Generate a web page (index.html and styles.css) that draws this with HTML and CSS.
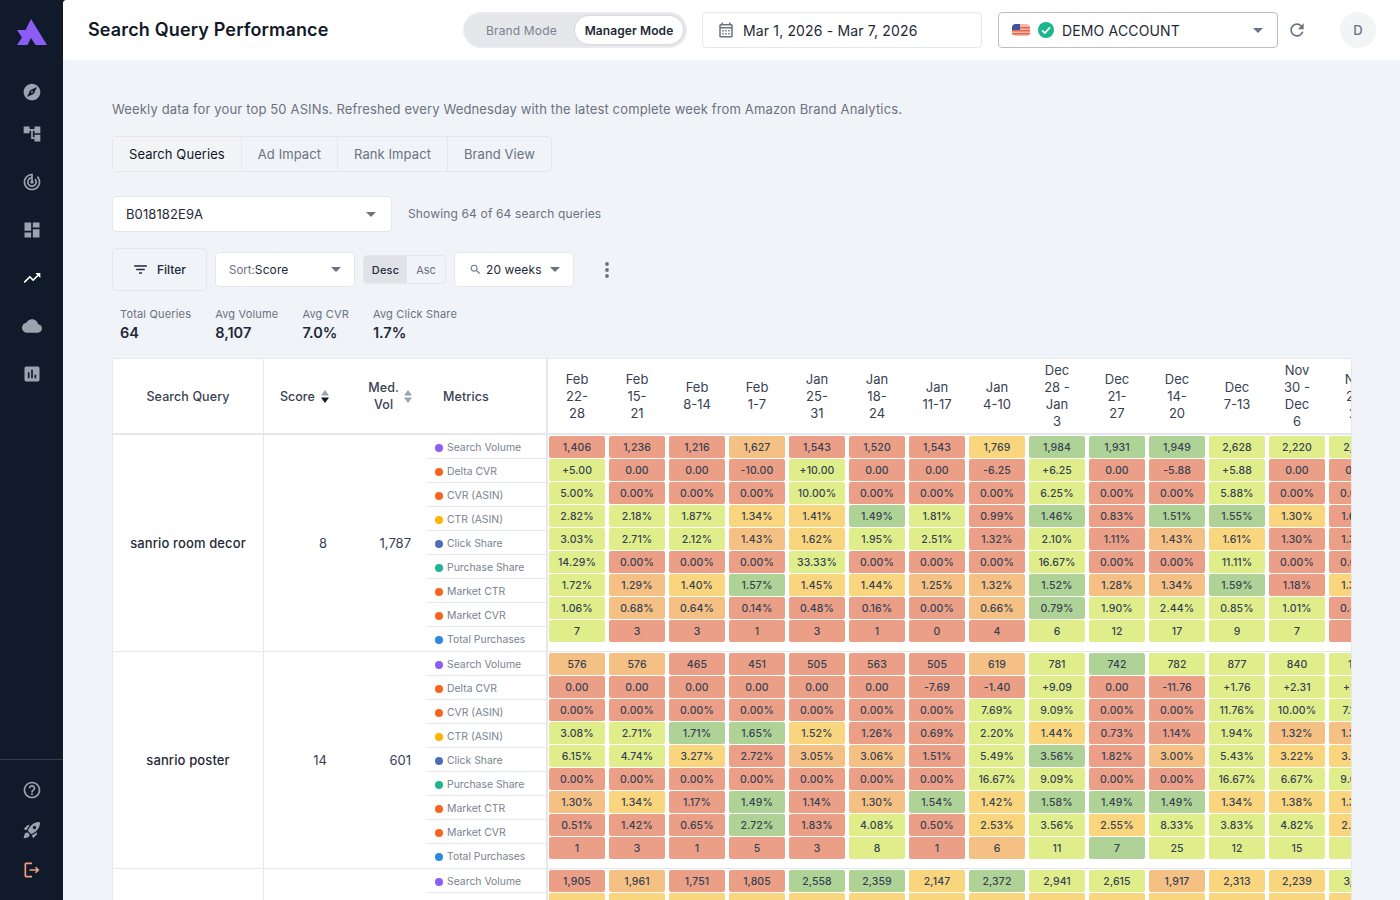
FILE: index.html
```html
<!DOCTYPE html>
<html lang="en">
<head>
<meta charset="utf-8">
<title>Search Query Performance</title>
<link rel="stylesheet" href="styles.css">
</head>
<body>
<div class="app">
  <aside class="sidebar">
    <svg class="logo" viewBox="0 0 30 26"><path d="M14 0 30 26H18.500L14 19 10.500 26H0L5 18.500 0 11H8.500Z"/></svg>
    <nav class="nav">
      <svg class="ico ico-first" viewBox="0 0 24 24"><path d="M12 10.900c-.61 0-1.100.49-1.100 1.100s.49 1.100 1.100 1.100c.61 0 1.100-.49 1.100-1.100s-.49-1.100-1.100-1.100zM12 2C6.480 2 2 6.480 2 12s4.480 10 10 10 10-4.480 10-10S17.520 2 12 2zm2.190 12.190L6 18l3.810-8.190L18 6l-3.810 8.190z"/></svg>
      <svg class="ico" viewBox="0 0 24 24"><path d="M22 11V3h-7v3H9V3H2v8h7V8h2v10h4v3h7v-8h-7v3h-2V8h2v3z"/></svg>
      <svg class="ico" viewBox="0 0 24 24"><path d="M19.070 4.930l-1.410 1.410C19.100 7.790 20 9.790 20 12c0 4.420-3.580 8-8 8s-8-3.580-8-8c0-4.080 3.050-7.440 7-7.930v2.020C8.160 6.570 6 9.030 6 12c0 3.310 2.690 6 6 6s6-2.690 6-6c0-1.660-.67-3.160-1.760-4.240l-1.410 1.410C15.550 9.900 16 10.900 16 12c0 2.210-1.790 4-4 4s-4-1.790-4-4c0-1.860 1.280-3.410 3-3.860v2.140c-.6.35-1 .98-1 1.720 0 1.100.9 2 2 2s2-.9 2-2c0-.74-.4-1.380-1-1.720V2h-1C6.480 2 2 6.480 2 12s4.480 10 10 10 10-4.480 10-10c0-2.760-1.120-5.260-2.930-7.070z"/></svg>
      <svg class="ico" viewBox="0 0 24 24"><path d="M3 13h8V3H3v10zm0 8h8v-6H3v6zm10 0h8V11h-8v10zm0-18v6h8V3h-8z"/></svg>
      <svg class="ico ico-on" viewBox="0 0 24 24"><path d="M16 6l2.290 2.290-4.880 4.880-4-4L2 16.590 3.410 18l6-6 4 4 6.300-6.290L22 12V6z"/></svg>
      <svg class="ico" viewBox="0 0 24 24"><path d="M19.350 10.040C18.670 6.590 15.640 4 12 4 9.110 4 6.600 5.640 5.350 8.040 2.340 8.360 0 10.910 0 14c0 3.310 2.690 6 6 6h13c2.760 0 5-2.240 5-5 0-2.640-2.050-4.780-4.650-4.960z"/></svg>
      <svg class="ico" viewBox="0 0 24 24"><path d="M19 3H5c-1.100 0-2 .9-2 2v14c0 1.100.9 2 2 2h14c1.100 0 2-.9 2-2V5c0-1.100-.9-2-2-2zM9 17H7v-7h2v7zm4 0h-2V7h2v10zm4 0h-2v-4h2v4z"/></svg>
    </nav>
    <div class="nav-bottom">
      <svg class="ico" viewBox="0 0 24 24"><path d="M11 18h2v-2h-2v2zm1-16C6.480 2 2 6.480 2 12s4.480 10 10 10 10-4.480 10-10S17.520 2 12 2zm0 18c-4.410 0-8-3.590-8-8s3.590-8 8-8 8 3.590 8 8-3.590 8-8 8zm0-14c-2.210 0-4 1.790-4 4h2c0-1.100.9-2 2-2s2 .9 2 2c0 2-3 1.750-3 5h2c0-2.250 3-2.500 3-5 0-2.210-1.790-4-4-4z"/></svg>
      <svg class="ico" viewBox="0 0 24 24"><path d="M9.190 6.350c-2.040 2.290-3.440 5.580-3.570 5.890L2 10.690l4.050-4.050c.47-.47 1.150-.68 1.810-.55l1.330.26zM11.170 17s3.740-1.550 5.890-3.700c5.400-5.400 4.500-9.620 4.210-10.570-.95-.3-5.170-1.190-10.570 4.210C8.550 9.050 7 12.830 7 12.830L11.170 17zm6.480-2.190c-2.290 2.040-5.580 3.440-5.890 3.570L13.310 22l4.050-4.050c.47-.47.68-1.150.55-1.810l-.26-1.330zM9 18c0 .83-.34 1.580-.88 2.120C6.940 21.300 2 22 2 22s.7-4.940 1.880-6.120C4.420 15.340 5.170 15 6 15c1.660 0 3 1.340 3 3zm4-9c0-1.100.9-2 2-2s2 .9 2 2-.9 2-2 2-2-.9-2-2z"/></svg>
      <svg class="ico ico-exit" viewBox="0 0 24 24"><path d="M17 8l-1.410 1.410L17.170 11H9v2h8.170l-1.580 1.580L17 16l4-4-4-4zM5 5h7V3H5c-1.100 0-2 .9-2 2v14c0 1.100.9 2 2 2h7v-2H5V5z"/></svg>
    </div>
  </aside>

  <div class="main">
    <header class="topbar">
      <h1 class="title">Search Query Performance</h1>
      <div class="mode">
        <span class="mode-off">Brand Mode</span>
        <span class="mode-on">Manager Mode</span>
      </div>
      <div class="date">
        <svg class="date-ico" viewBox="0 0 24 24"><path d="M19 4h-1V2h-2v2H8V2H6v2H5c-1.110 0-1.990.9-1.990 2L3 20c0 1.100.89 2 2 2h14c1.100 0 2-.9 2-2V6c0-1.100-.9-2-2-2zm0 16H5V10h14v10zm0-12H5V6h14v2zM9 14H7v-2h2v2zm4 0h-2v-2h2v2zm4 0h-2v-2h2v2zm-8 4H7v-2h2v2zm4 0h-2v-2h2v2zm4 0h-2v-2h2v2z"/></svg>
        <span>Mar 1, 2026 - Mar 7, 2026</span>
      </div>
      <div class="account">
        <svg class="flag" viewBox="0 0 18 12">
          <rect width="18" height="12" rx="4" fill="#f6b8a4"/>
          <path d="M0 3H18V4.500H0ZM0 6H18V7.500H0ZM0 9H18V10.500H0Z" fill="#e4674e"/>
          <path d="M4 0H8V6H0V4A4 4 0 0 1 4 0Z" fill="#3f51a3"/>
        </svg>
        <svg class="check" viewBox="0 0 16 16"><circle cx="8" cy="8" r="8" fill="#1db58d"/><path d="M4 8.300 6.900 11 12 5.400" fill="none" stroke="#fff" stroke-width="1.800"/></svg>
        <span class="account-name">DEMO ACCOUNT</span>
        <span class="caret"></span>
      </div>
      <svg class="refresh" viewBox="0 0 24 24"><path d="M17.650 6.350C16.200 4.900 14.210 4 12 4c-4.420 0-7.990 3.580-7.990 8s3.570 8 7.990 8c3.730 0 6.840-2.550 7.730-6h-2.080c-.82 2.330-3.040 4-5.650 4-3.310 0-6-2.690-6-6s2.690-6 6-6c1.660 0 3.140.69 4.220 1.780L13 11h7V4l-2.350 2.350z"/></svg>
      <div class="avatar">D</div>
    </header>

    <main class="content">
      <p class="lead">Weekly data for your top 50 ASINs. Refreshed every Wednesday with the latest complete week from Amazon Brand Analytics.</p>

      <div class="tabs">
        <span class="tab tab-on">Search Queries</span>
        <span class="tab">Ad Impact</span>
        <span class="tab">Rank Impact</span>
        <span class="tab">Brand View</span>
      </div>

      <div class="asin-row">
        <div class="asin"><span>B018182E9A</span><span class="caret"></span></div>
        <span class="showing">Showing 64 of 64 search queries</span>
      </div>

      <div class="controls">
        <div class="filter">
          <svg class="filter-ico" viewBox="0 0 24 24"><path d="M10 18h4v-2h-4v2zM3 6v2h18V6H3zm3 7h12v-2H6v2z"/></svg>
          <span>Filter</span>
        </div>
        <div class="sort"><span class="sort-label">Sort:</span><span class="sort-val">Score</span><span class="caret"></span></div>
        <div class="order"><span class="order-on">Desc</span><span class="order-off">Asc</span></div>
        <div class="weeks">
          <svg class="weeks-ico" viewBox="0 0 24 24"><path d="M15.500 14h-.79l-.28-.27C15.410 12.590 16 11.110 16 9.500 16 5.910 13.090 3 9.500 3S3 5.910 3 9.500 5.910 16 9.500 16c1.610 0 3.090-.59 4.230-1.570l.27.28v.79l5 4.990L20.490 19l-4.990-5zm-6 0C7.010 14 5 11.990 5 9.500S7.010 5 9.500 5 14 7.010 14 9.500 11.990 14 9.500 14z"/></svg>
          <span>20 weeks</span><span class="caret"></span>
        </div>
        <svg class="more" viewBox="0 0 4 16"><circle cx="2" cy="2" r="1.900"/><circle cx="2" cy="8" r="1.900"/><circle cx="2" cy="14" r="1.900"/></svg>
      </div>

      <div class="stats">
        <div class="stat"><span class="stat-label">Total Queries</span><strong class="stat-val">64</strong></div>
        <div class="stat"><span class="stat-label">Avg Volume</span><strong class="stat-val">8,107</strong></div>
        <div class="stat"><span class="stat-label">Avg CVR</span><strong class="stat-val">7.0%</strong></div>
        <div class="stat"><span class="stat-label">Avg Click Share</span><strong class="stat-val">1.7%</strong></div>
      </div>

      <div class="table">
        <div class="thead">
          <div class="col-q th">Search Query</div>
          <div class="col-s th th-score">Score
            <svg class="sorter" viewBox="0 0 8 13"><path d="M4 0 8 5.500H0Z" fill="#9ca3af"/><path d="M4 13 8 7.500H0Z" fill="#111827"/></svg>
          </div>
          <div class="col-v th th-vol"><span class="vol-text">Med.<br>Vol</span>
            <svg class="sorter" viewBox="0 0 8 13"><path d="M4 0 8 5.500H0Z" fill="#9ca3af"/><path d="M4 13 8 7.500H0Z" fill="#9ca3af"/></svg>
          </div>
          <div class="col-m th th-metrics">Metrics</div>
          <div class="dates">
            <span>Feb 22-28</span><span>Feb 15-21</span><span>Feb 8-14</span><span>Feb 1-7</span><span>Jan 25-31</span><span>Jan 18-24</span><span>Jan 11-17</span><span>Jan 4-10</span><span>Dec 28 - Jan 3</span><span>Dec 21-27</span><span>Dec 14-20</span><span>Dec 7-13</span><span>Nov 30 - Dec 6</span><span>Nov 23-29</span>
          </div>
        </div>

        <div class="group">
          <div class="col-q query">sanrio room decor</div>
          <div class="col-s num">8</div>
          <div class="col-v num">1,787</div>
          <ul class="col-m metrics">
            <li><i class="dot d-vol"></i>Search Volume</li>
            <li><i class="dot d-org"></i>Delta CVR</li>
            <li><i class="dot d-org"></i>CVR (ASIN)</li>
            <li><i class="dot d-amb"></i>CTR (ASIN)</li>
            <li><i class="dot d-clk"></i>Click Share</li>
            <li><i class="dot d-grn"></i>Purchase Share</li>
            <li><i class="dot d-org"></i>Market CTR</li>
            <li><i class="dot d-org"></i>Market CVR</li>
            <li><i class="dot d-blu"></i>Total Purchases</li>
          </ul>
          <div class="heat">
            <span class="r">1,406</span><span class="l">+5.00</span><span class="l">5.00%</span><span class="l">2.82%</span><span class="l">3.03%</span><span class="l">14.29%</span><span class="l">1.72%</span><span class="l">1.06%</span><span class="l">7</span>
            <span class="r">1,236</span><span class="r">0.00</span><span class="r">0.00%</span><span class="l">2.18%</span><span class="l">2.71%</span><span class="r">0.00%</span><span class="o">1.29%</span><span class="o">0.68%</span><span class="r">3</span>
            <span class="r">1,216</span><span class="r">0.00</span><span class="r">0.00%</span><span class="l">1.87%</span><span class="l">2.12%</span><span class="r">0.00%</span><span class="y">1.40%</span><span class="o">0.64%</span><span class="r">3</span>
            <span class="o">1,627</span><span class="r">-10.00</span><span class="r">0.00%</span><span class="y">1.34%</span><span class="o">1.43%</span><span class="r">0.00%</span><span class="g">1.57%</span><span class="r">0.14%</span><span class="r">1</span>
            <span class="r">1,543</span><span class="l">+10.00</span><span class="l">10.00%</span><span class="y">1.41%</span><span class="y">1.62%</span><span class="l">33.33%</span><span class="y">1.45%</span><span class="r">0.48%</span><span class="r">3</span>
            <span class="r">1,520</span><span class="r">0.00</span><span class="r">0.00%</span><span class="g">1.49%</span><span class="l">1.95%</span><span class="r">0.00%</span><span class="y">1.44%</span><span class="r">0.16%</span><span class="r">1</span>
            <span class="r">1,543</span><span class="r">0.00</span><span class="r">0.00%</span><span class="l">1.81%</span><span class="l">2.51%</span><span class="r">0.00%</span><span class="o">1.25%</span><span class="r">0.00%</span><span class="r">0</span>
            <span class="y">1,769</span><span class="r">-6.25</span><span class="r">0.00%</span><span class="r">0.99%</span><span class="r">1.32%</span><span class="r">0.00%</span><span class="o">1.32%</span><span class="o">0.66%</span><span class="r">4</span>
            <span class="g">1,984</span><span class="l">+6.25</span><span class="l">6.25%</span><span class="g">1.46%</span><span class="l">2.10%</span><span class="l">16.67%</span><span class="g">1.52%</span><span class="g">0.79%</span><span class="l">6</span>
            <span class="g">1,931</span><span class="r">0.00</span><span class="r">0.00%</span><span class="r">0.83%</span><span class="r">1.11%</span><span class="r">0.00%</span><span class="o">1.28%</span><span class="l">1.90%</span><span class="l">12</span>
            <span class="g">1,949</span><span class="r">-5.88</span><span class="r">0.00%</span><span class="g">1.51%</span><span class="o">1.43%</span><span class="r">0.00%</span><span class="o">1.34%</span><span class="l">2.44%</span><span class="l">17</span>
            <span class="l">2,628</span><span class="l">+5.88</span><span class="l">5.88%</span><span class="g">1.55%</span><span class="y">1.61%</span><span class="l">11.11%</span><span class="g">1.59%</span><span class="l">0.85%</span><span class="l">9</span>
            <span class="l">2,220</span><span class="r">0.00</span><span class="r">0.00%</span><span class="y">1.30%</span><span class="r">1.30%</span><span class="r">0.00%</span><span class="r">1.18%</span><span class="l">1.01%</span><span class="l">7</span>
            <span class="l">2,310</span><span class="r">0.00</span><span class="r">0.00%</span><span class="r">1.62%</span><span class="r">1.32%</span><span class="r">0.00%</span><span class="y">1.35%</span><span class="r">0.42%</span><span class="r">2</span>
          </div>
        </div>

        <div class="group">
          <div class="col-q query">sanrio poster</div>
          <div class="col-s num">14</div>
          <div class="col-v num">601</div>
          <ul class="col-m metrics">
            <li><i class="dot d-vol"></i>Search Volume</li>
            <li><i class="dot d-org"></i>Delta CVR</li>
            <li><i class="dot d-org"></i>CVR (ASIN)</li>
            <li><i class="dot d-amb"></i>CTR (ASIN)</li>
            <li><i class="dot d-clk"></i>Click Share</li>
            <li><i class="dot d-grn"></i>Purchase Share</li>
            <li><i class="dot d-org"></i>Market CTR</li>
            <li><i class="dot d-org"></i>Market CVR</li>
            <li><i class="dot d-blu"></i>Total Purchases</li>
          </ul>
          <div class="heat">
            <span class="o">576</span><span class="r">0.00</span><span class="r">0.00%</span><span class="l">3.08%</span><span class="l">6.15%</span><span class="r">0.00%</span><span class="o">1.30%</span><span class="r">0.51%</span><span class="r">1</span>
            <span class="o">576</span><span class="r">0.00</span><span class="r">0.00%</span><span class="l">2.71%</span><span class="l">4.74%</span><span class="r">0.00%</span><span class="y">1.34%</span><span class="r">1.42%</span><span class="r">3</span>
            <span class="r">465</span><span class="r">0.00</span><span class="r">0.00%</span><span class="g">1.71%</span><span class="y">3.27%</span><span class="r">0.00%</span><span class="r">1.17%</span><span class="r">0.65%</span><span class="r">1</span>
            <span class="r">451</span><span class="r">0.00</span><span class="r">0.00%</span><span class="g">1.65%</span><span class="r">2.72%</span><span class="r">0.00%</span><span class="g">1.49%</span><span class="g">2.72%</span><span class="r">5</span>
            <span class="r">505</span><span class="r">0.00</span><span class="r">0.00%</span><span class="y">1.52%</span><span class="o">3.05%</span><span class="r">0.00%</span><span class="r">1.14%</span><span class="r">1.83%</span><span class="r">3</span>
            <span class="r">563</span><span class="r">0.00</span><span class="r">0.00%</span><span class="r">1.26%</span><span class="o">3.06%</span><span class="r">0.00%</span><span class="o">1.30%</span><span class="l">4.08%</span><span class="l">8</span>
            <span class="r">505</span><span class="r">-7.69</span><span class="r">0.00%</span><span class="r">0.69%</span><span class="r">1.51%</span><span class="r">0.00%</span><span class="g">1.54%</span><span class="r">0.50%</span><span class="r">1</span>
            <span class="o">619</span><span class="r">-1.40</span><span class="l">7.69%</span><span class="l">2.20%</span><span class="l">5.49%</span><span class="l">16.67%</span><span class="y">1.42%</span><span class="y">2.53%</span><span class="o">6</span>
            <span class="l">781</span><span class="l">+9.09</span><span class="l">9.09%</span><span class="y">1.44%</span><span class="g">3.56%</span><span class="l">9.09%</span><span class="g">1.58%</span><span class="l">3.56%</span><span class="l">11</span>
            <span class="g">742</span><span class="r">0.00</span><span class="r">0.00%</span><span class="r">0.73%</span><span class="r">1.82%</span><span class="r">0.00%</span><span class="g">1.49%</span><span class="y">2.55%</span><span class="g">7</span>
            <span class="l">782</span><span class="r">-11.76</span><span class="r">0.00%</span><span class="r">1.14%</span><span class="o">3.00%</span><span class="r">0.00%</span><span class="g">1.49%</span><span class="l">8.33%</span><span class="l">25</span>
            <span class="l">877</span><span class="l">+1.76</span><span class="l">11.76%</span><span class="l">1.94%</span><span class="l">5.43%</span><span class="l">16.67%</span><span class="y">1.34%</span><span class="l">3.83%</span><span class="l">12</span>
            <span class="l">840</span><span class="l">+2.31</span><span class="l">10.00%</span><span class="o">1.32%</span><span class="y">3.22%</span><span class="l">6.67%</span><span class="y">1.38%</span><span class="l">4.82%</span><span class="l">15</span>
            <span class="l">165</span><span class="l">+1.35</span><span class="l">7.14%</span><span class="o">1.34%</span><span class="y">3.41%</span><span class="l">9.09%</span><span class="y">1.36%</span><span class="y">2.61%</span><span class="l">9</span>
          </div>
        </div>

        <div class="group">
          <div class="col-q query"></div>
          <div class="col-s num"></div>
          <div class="col-v num"></div>
          <ul class="col-m metrics">
            <li><i class="dot d-vol"></i>Search Volume</li>
            <li><i class="dot d-org"></i>Delta CVR</li>
          </ul>
          <div class="heat heat-short">
            <span class="r">1,905</span><span class="y"></span>
            <span class="o">1,961</span><span class="y"></span>
            <span class="r">1,751</span><span class="y"></span>
            <span class="r">1,805</span><span class="y"></span>
            <span class="g">2,558</span><span class="y"></span>
            <span class="g">2,359</span><span class="y"></span>
            <span class="y">2,147</span><span class="y"></span>
            <span class="g">2,372</span><span class="y"></span>
            <span class="l">2,941</span><span class="y"></span>
            <span class="l">2,615</span><span class="y"></span>
            <span class="o">1,917</span><span class="y"></span>
            <span class="y">2,313</span><span class="y"></span>
            <span class="y">2,239</span><span class="y"></span>
            <span class="l">3,104</span><span class="y"></span>
          </div>
        </div>
      </div>
    </main>
  </div>
</div>
</body>
</html>
```
FILE: styles.css
```css
* { box-sizing: border-box; }
html, body { margin: 0; height: 100%; overflow: hidden; }
body { font-family: Inter, "Liberation Sans", sans-serif; color: #111827; background: #111a2b; }
h1, p, ul { margin: 0; padding: 0; }
ul { list-style: none; }
i { font-style: normal; }

.app { display: flex; height: 900px; }

/* sidebar */
.sidebar { flex: none; width: 63px; background: #111a2b; display: flex; flex-direction: column; align-items: center; }
.logo { width: 30px; height: 26px; margin: 19px 0 0 1px; fill: #8b5cf6; flex: none; }
.nav { display: flex; flex-direction: column; align-items: center; gap: 28px; margin-top: 37px; flex: 1; }
.ico { width: 20px; height: 20px; fill: #9ca3af; flex: none; display: block; }
.ico-first { margin-bottom: -6px; }
.ico-on { fill: #fff; }
.ico-exit { fill: #f0a080; }
.nav-bottom { width: 100%; height: 141px; border-top: 1px solid #343c4e; padding-top: 20px; display: flex; flex-direction: column; align-items: center; gap: 20px; }

/* main */
.main { flex: 1; min-width: 0; background: #f0f3f8; border-radius: 4px 0 0 0; overflow: hidden; }
.topbar { height: 60px; background: #fff; display: flex; align-items: center; padding: 0 24px 0 25px; }
.title { font-size: 18px; font-weight: 600; line-height: 24px; letter-spacing: .15px; color: #111827; width: 376px; flex: none; white-space: nowrap; }

.mode { width: 222px; height: 34px; background: #e5e7eb; border-radius: 17px; display: flex; align-items: center; justify-content: space-between; padding: 0 3px 0 22px; flex: none; box-shadow: 0 0 0 1px #eceef1; }
.mode-off { font-size: 12px; letter-spacing: .15px; color: #7b828e; }
.mode-on { width: 108px; height: 28px; background: #fff; border-radius: 14px; font-size: 12px; font-weight: 600; letter-spacing: .1px; color: #1f2937; display: flex; align-items: center; justify-content: center; box-shadow: 0 0 2px rgba(0,0,0,.18); }

.date { width: 280px; height: 36px; margin-left: 16px; flex: none; border: 1px solid #e5e7eb; border-radius: 4px; background: #fff; display: flex; align-items: center; gap: 8px; padding-left: 14px; font-size: 14px; color: #1f2937; letter-spacing: .15px; }
.date-ico { width: 18px; height: 18px; fill: #6b7280; flex: none; }

.account { width: 280px; height: 36px; margin-left: 16px; flex: none; border: 1px solid #bcbfc5; border-radius: 4px; display: flex; align-items: center; padding: 0 14px 0 13px; font-size: 14px; letter-spacing: .15px; color: #1f2937; }
.flag { width: 18px; height: 12px; flex: none; }
.check { width: 16px; height: 16px; margin-left: 8px; flex: none; }
.account-name { margin-left: 8px; flex: 1; }
.refresh { width: 20px; height: 20px; fill: #6b7280; margin-left: 9px; flex: none; }
.avatar { width: 36px; height: 36px; border-radius: 50%; background: #f3f4f6; margin-left: 33px; flex: none; display: flex; align-items: center; justify-content: center; font-size: 13px; color: #6b7280; font-weight: 500; }

.caret { width: 0; height: 0; border-left: 5px solid transparent; border-right: 5px solid transparent; border-top: 5px solid #6b7280; flex: none; }

/* content */
.content { padding: 40px 48px 0 49px; }
.lead { font-size: 13px; line-height: 18px; color: #6b7280; letter-spacing: .15px; white-space: nowrap; }

.tabs { display: inline-flex; height: 36px; margin-top: 18px; border: 1px solid #e5e7eb; border-radius: 4px; vertical-align: top; }
.tab { padding: 0 16px; display: flex; align-items: center; font-size: 13px; color: #6b7280; border-left: 1px solid #e5e7eb; letter-spacing: .08px; }
.tab:first-child { border-left: 0; }
.tab-on { background: #f3f4f6; color: #111827; }

.asin-row { display: flex; align-items: center; gap: 16px; margin-top: 24px; }
.asin { width: 280px; height: 36px; background: #fff; border: 1px solid #e5e7eb; border-radius: 4px; display: flex; align-items: center; justify-content: space-between; padding: 0 15px 0 13px; font-size: 13px; letter-spacing: .1px; color: #1f2937; }
.showing { font-size: 12px; color: #6b7280; letter-spacing: .15px; padding-bottom: 2px; }

.controls { display: flex; align-items: center; margin-top: 16px; height: 43px; }
.filter { width: 95px; height: 43px; border: 1px solid #e5e7eb; border-radius: 4px; display: flex; align-items: center; gap: 8px; padding-left: 19px; font-size: 12px; font-weight: 500; color: #1f2937; flex: none; }
.filter-ico { width: 17px; height: 17px; fill: #1f2937; flex: none; }
.sort { width: 140px; height: 35px; margin-left: 8px; background: #fff; border: 1px solid #e5e7eb; border-radius: 4px; display: flex; align-items: center; padding: 0 13px; flex: none; }
.sort-label { font-size: 11.500px; color: #6b7280; }
.sort-val { font-size: 12px; letter-spacing: .1px; color: #1f2937; flex: 1; }
.order { display: flex; margin-left: 8px; height: 29px; width: 83px; border: 1px solid #e5e7eb; border-radius: 4px; overflow: hidden; flex: none; }
.order-on { width: 43px; background: #e0e2e7; font-size: 11px; font-weight: 500; letter-spacing: .15px; color: #1f2937; display: flex; align-items: center; justify-content: center; }
.order-off { flex: 1; font-size: 11px; color: #6b7280; display: flex; align-items: center; justify-content: center; }
.weeks { width: 120px; height: 35px; margin-left: 8px; background: #fff; border: 1px solid #e5e7eb; border-radius: 4px; display: flex; align-items: center; padding: 0 13px 0 14px; font-size: 12px; color: #1f2937; letter-spacing: .1px; flex: none; }
.weeks-ico { width: 13px; height: 13px; fill: #6b7280; margin-right: 4px; flex: none; }
.weeks span:not(.caret) { flex: 1; }
.more { width: 4px; height: 16px; margin-left: 31px; fill: #6b7280; flex: none; }

.stats { display: flex; gap: 24px; margin-top: 16px; padding-left: 8px; }
.stat { display: flex; flex-direction: column; }
.stat-label { font-size: 11px; line-height: 14px; letter-spacing: .17px; color: #6b7280; white-space: nowrap; }
.stat-val { font-size: 14.500px; line-height: 20px; margin-top: 2px; font-weight: 600; color: #1f2937; }

/* table */
.table { width: 1240px; margin-top: 15px; background: #fff; border: 1px solid #e5e7eb; border-bottom: 0; overflow: hidden; }
.thead { display: flex; height: 76px; border-bottom: 2px solid #e5e7eb; }
.col-q { width: 151px; flex: none; border-right: 1px solid #e5e7eb; }
.col-s { width: 79px; flex: none; }
.col-v { width: 84px; flex: none; }
.col-m { width: 121px; flex: none; border-right: 2px solid #e5e7eb; }
.th { font-size: 12.500px; font-weight: 500; color: #374151; letter-spacing: .1px; display: flex; align-items: center; }
.thead .col-q { justify-content: center; }
.th-score { padding-left: 16px; gap: 6px; letter-spacing: 0; }
.th-vol { justify-content: flex-end; padding-right: 15px; gap: 5px; }
.vol-text { text-align: center; line-height: 17px; }
.sorter { width: 8px; height: 13px; flex: none; }
.th-metrics { padding-left: 16px; }
.dates { display: grid; grid-template-columns: repeat(14, 56px); column-gap: 4px; padding-left: 1px; flex: none; align-items: center; }
.dates span { font-size: 13px; line-height: 17px; color: #374151; text-align: center; padding: 0 13px; }

.group { display: flex; height: 217px; border-bottom: 1px solid #e5e7eb; }
.query { display: flex; align-items: center; justify-content: center; font-size: 13px; font-weight: 500; letter-spacing: .12px; color: #1f2937; }
.num { display: flex; align-items: center; justify-content: flex-end; padding-right: 16px; font-size: 13px; color: #374151; }
.metrics li { height: 24px; border-bottom: 1px solid #e5e7eb; display: flex; align-items: center; padding: 2px 0 0 8px; font-size: 10.400px; color: #7b828e; white-space: nowrap; }
.metrics li:last-child { border-bottom-color: transparent; }
.dot { width: 8px; height: 8px; border-radius: 50%; margin-right: 4px; flex: none; }
.d-vol { background: #8b5cf6; }
.d-org { background: #f9631f; }
.d-amb { background: #ffb300; }
.d-clk { background: #4a6fb5; }
.d-grn { background: #1fb58f; }
.d-blu { background: #2b8ae0; }

.heat { display: grid; grid-auto-flow: column; grid-template-rows: repeat(9, 22px); grid-auto-columns: 56px; gap: 1px 4px; padding: 1px 0 0 1px; flex: none; align-content: start; }
.heat-short { grid-template-rows: repeat(2, 22px); }
.heat span { border-radius: 2px; font-size: 10.500px; font-weight: 500; color: #374151; display: flex; align-items: center; justify-content: center; letter-spacing: .1px; }
.r { background: #eb9f87; }
.o { background: #f5c084; }
.y { background: #f9d57e; }
.l { background: #dfee8b; }
.g { background: #afd396; }
```
